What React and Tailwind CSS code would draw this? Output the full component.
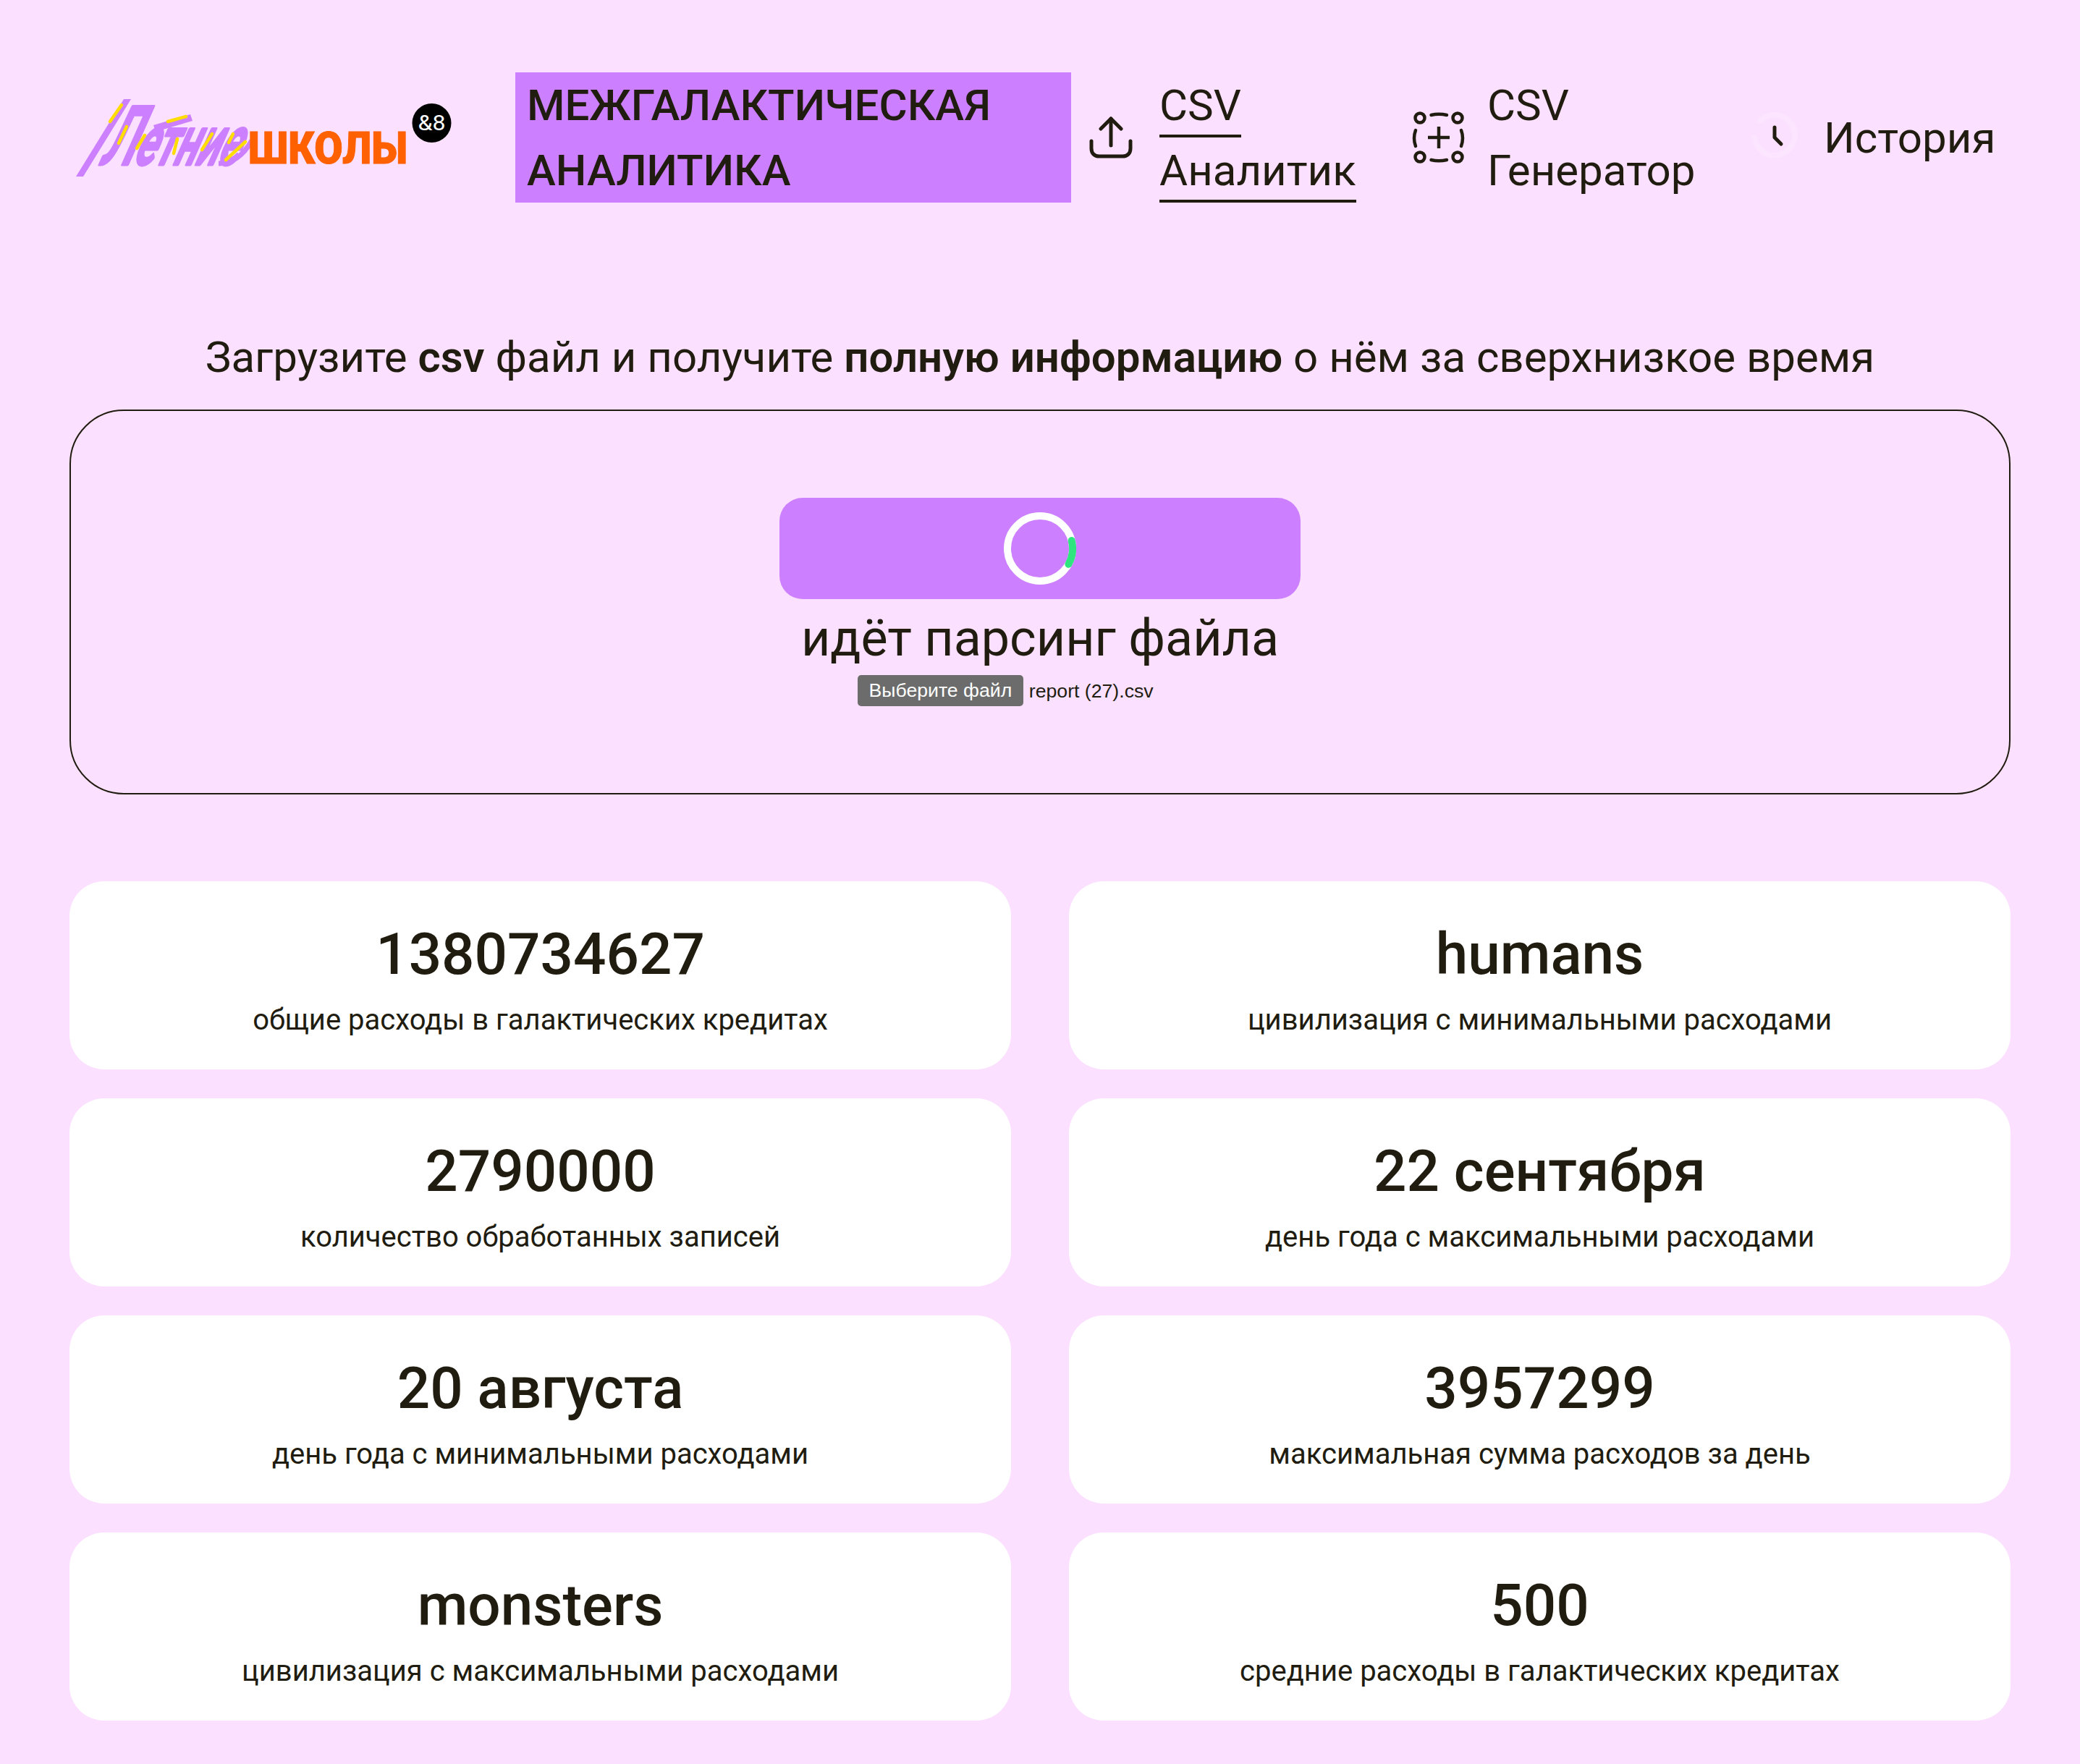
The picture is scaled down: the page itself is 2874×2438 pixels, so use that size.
const cards = [
  ["1380734627", "общие расходы в галактических кредитах"],
  ["humans", "цивилизация с минимальными расходами"],
  ["2790000", "количество обработанных записей"],
  ["22 сентября", "день года с максимальными расходами"],
  ["20 августа", "день года с минимальными расходами"],
  ["3957299", "максимальная сумма расходов за день"],
  ["monsters", "цивилизация с максимальными расходами"],
  ["500", "средние расходы в галактических кредитах"],
];

function Logo() {
  return (
    <svg width="530" height="120" viewBox="100 130 530 120" className="block shrink-0 overflow-visible">
      <polygon points="105,244 115,244 181,137 171,137" fill="#cc80ff" />
      <text
        transform="translate(136 227) skewX(-24) scale(0.58 1)"
        fontFamily="Roboto, sans-serif"
        fontSize="92"
        fontWeight="500"
        fill="#cc80ff"
        stroke="#cc80ff"
        strokeWidth="5"
        strokeLinejoin="round"
      >
        <tspan fontSize="112">Л</tspan>етние
      </text>
      <polygon points="212,173 263,158 266,167 215,182" fill="#cc80ff" />
      <path d="M302 226 Q330 226 348 194" fill="none" stroke="#cc80ff" strokeWidth="7" />
      <g stroke="#ffdd00" strokeWidth="4.5" strokeLinecap="round" fill="none">
        <line x1="152" y1="168" x2="168" y2="145" />
        <line x1="164" y1="198" x2="175" y2="175" />
        <line x1="189" y1="205" x2="200" y2="187" />
        <line x1="232" y1="168" x2="257" y2="161" />
        <line x1="240" y1="212" x2="245" y2="192" />
        <line x1="279" y1="207" x2="293" y2="185" />
        <line x1="316" y1="197" x2="322" y2="185" />
        <line x1="312" y1="221" x2="339" y2="196" />
      </g>
      <text
        x="343"
        y="226"
        fontFamily="Roboto, sans-serif"
        fontWeight="900"
        fontSize="61"
        fill="#ff6000"
        stroke="#ff6000"
        strokeWidth="1"
        textLength="220"
        lengthAdjust="spacingAndGlyphs"
      >
        ШКОЛЫ
      </text>
      <circle cx="596.5" cy="170" r="27" fill="#000" />
      <text
        x="596.5"
        y="180"
        textAnchor="middle"
        fontFamily="Roboto, sans-serif"
        fontSize="29"
        fill="#fff"
        textLength="38"
        lengthAdjust="spacingAndGlyphs"
      >
        &amp;8
      </text>
    </svg>
  );
}

function UploadIcon() {
  return (
    <svg width="80" height="80" viewBox="0 0 80 80" fill="none" stroke="#211c10" strokeWidth="5" strokeLinecap="round" strokeLinejoin="round" className="shrink-0">
      <path d="M40 51V14" />
      <path d="M26 28L40 14L54 28" />
      <path d="M13 45V55C13 62 17 66 24 66H56C63 66 67 62 67 55V45" />
    </svg>
  );
}

function GenerateIcon() {
  return (
    <svg width="100" height="90" viewBox="0 0 100 90" fill="none" stroke="#211c10" strokeWidth="4.5" strokeLinecap="round" className="shrink-0">
      <circle cx="22" cy="18" r="6.5" />
      <circle cx="74" cy="18" r="6.5" />
      <circle cx="22" cy="72" r="6.5" />
      <circle cx="74" cy="72" r="6.5" />
      <path d="M37.500 14Q48 11.500 59 14" />
      <path d="M37.500 76Q48 78.500 59 76" />
      <path d="M16 35Q12 46 16 57" />
      <path d="M79 35Q83 46 79 57" />
      <path d="M33 45H63M48 30V60" strokeLinecap="butt" />
    </svg>
  );
}

function ClockIcon() {
  return (
    <svg width="90" height="90" viewBox="0 0 90 90" fill="none" strokeLinecap="round" strokeLinejoin="round" className="shrink-0">
      <path d="M26 22A28 28 0 1 1 18 45" stroke="#fce5ff" strokeWidth="8" />
      <path d="M46 31V45L55 54" stroke="#211c10" strokeWidth="5" />
    </svg>
  );
}

function Spinner() {
  return (
    <svg width="100" height="100" viewBox="0 0 100 100" fill="none">
      <circle cx="50" cy="50" r="45" stroke="#fff" strokeWidth="10" />
      <path d="M93.700 39.100A45 45 0 0 1 89.400 71.800" stroke="#2ee580" strokeWidth="10" strokeLinecap="round" />
    </svg>
  );
}

export default function App() {
  return (
    <div className="min-h-[2438px] bg-[#fbe0ff] pb-[60px] font-['Roboto',sans-serif] text-[#211c10] px-[96px]">
      <header className="flex h-[280px] items-center pt-[100px] text-[60px] leading-[90px]">
        <div className="w-[616px] shrink-0 pl-[4px]">
          <Logo />
        </div>
        <div className="box-border h-[180px] w-[768px] shrink-0 bg-[#cc80ff] px-[16px] pt-px font-medium">
          МЕЖГАЛАКТИЧЕСКАЯ
          <br />
          АНАЛИТИКА
        </div>
        <div className="ml-[15px] flex items-center">
          <UploadIcon />
          <div className="ml-[27px] w-[271px]">
            <div className="box-border h-[90px] w-fit border-b-4 border-[#211c10] pt-px">CSV</div>
            <div className="box-border h-[90px] w-fit border-b-4 border-[#211c10] pt-px">Аналитик</div>
          </div>
        </div>
        <div className="ml-[67px] flex items-center">
          <GenerateIcon />
          <div className="ml-[15px] box-border h-[180px] w-[290px] pt-px">
            <div>CSV</div>
            <div>Генератор</div>
          </div>
        </div>
        <div className="ml-[61px] flex items-center">
          <ClockIcon />
          <span className="ml-[24px] pt-px">История</span>
        </div>
      </header>

      <p className="mt-[169px] mb-[27px] text-center text-[60px] leading-[90px]">
        Загрузите <b className="font-semibold">csv</b> файл и получите <b className="font-semibold">полную информацию</b> о нём за сверхнизкое время
      </p>

      <section className="flex flex-col items-center rounded-[75px] border-2 border-[#211c10] py-[120px]">
        <div className="flex h-[140px] w-[720px] items-center justify-center rounded-[32px] bg-[#cc80ff]">
          <Spinner />
        </div>
        <div className="box-border h-[105px] pt-[2px] text-[70px] leading-[105px]">идёт парсинг файла</div>
        <div className="flex w-[504px] items-center font-['Liberation_Sans',sans-serif] text-[26.67px]">
          <span className="rounded-[5px] bg-[#6c6c6c] px-[15.5px] py-[6px] leading-[31px] text-white">Выберите файл</span>
          <span className="ml-[8px]">report (27).csv</span>
        </div>
      </section>

      <div className="mt-[120px] grid grid-cols-2 gap-x-[80px] gap-y-[40px]">
        {cards.map(([value, label]) => (
          <div key={label} className="rounded-[48px] bg-white px-[40px] pt-[41px] pb-[39px] text-center">
            <div className="text-[80px] leading-[120px] font-medium">{value}</div>
            <div className="box-border h-[60px] pt-px text-[40px] leading-[60px]">{label}</div>
          </div>
        ))}
      </div>
    </div>
  );
}
